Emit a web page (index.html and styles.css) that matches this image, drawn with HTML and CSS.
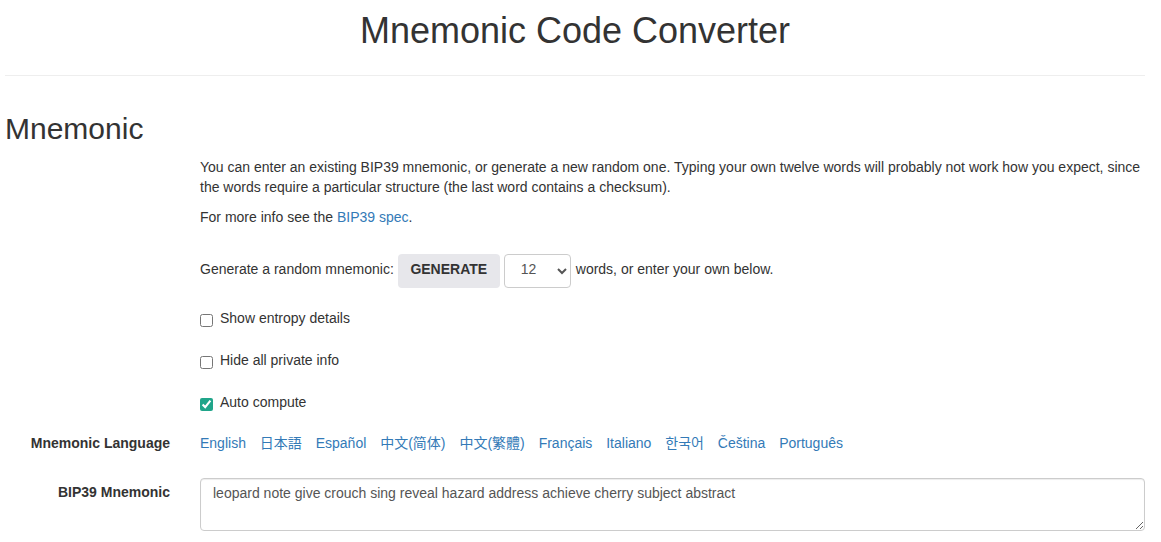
FILE: index.html
```html
<!DOCTYPE html>
<html lang="en">
<head>
<meta charset="utf-8">
<title>Mnemonic Code Converter</title>
<link rel="stylesheet" href="styles.css">
</head>
<body>
<div class="container">
  <h1 class="title">Mnemonic Code Converter</h1>
  <hr class="divider">
  <h2 class="section-title">Mnemonic</h2>
  <div class="form">
    <div class="form-row">
      <div class="label-col"></div>
      <div class="field-col">
        <p class="intro">You can enter an existing BIP39 mnemonic, or generate a new random one. Typing your own twelve words will probably not work how you expect, since the words require a particular structure (the last word contains a checksum).</p>
        <p class="intro">For more info see the <a href="#" class="link">BIP39 spec</a>.</p>
        <div class="generate-row">
          <span>Generate a random mnemonic:</span>
          <button class="btn-generate" type="button">GENERATE</button>
          <select class="strength">
            <option>3</option>
            <option>6</option>
            <option>9</option>
            <option selected>12</option>
            <option>15</option>
            <option>18</option>
            <option>21</option>
            <option>24</option>
          </select>
          <span>words, or enter your own below.</span>
        </div>
        <label class="check"><input type="checkbox"><span>Show entropy details</span></label>
        <label class="check"><input type="checkbox"><span>Hide all private info</span></label>
        <label class="check"><input type="checkbox" checked><span>Auto compute</span></label>
      </div>
    </div>
    <div class="form-row lang-row">
      <div class="label-col">Mnemonic Language</div>
      <div class="field-col languages">
        <a href="#" class="link">English</a>
        <a href="#" class="link cjk-jp">日本語</a>
        <a href="#" class="link">Español</a>
        <a href="#" class="link cjk-sc">中文(简体)</a>
        <a href="#" class="link cjk-tc">中文(繁體)</a>
        <a href="#" class="link">Français</a>
        <a href="#" class="link">Italiano</a>
        <a href="#" class="link cjk-kr">한국어</a>
        <a href="#" class="link">Čeština</a>
        <a href="#" class="link">Português</a>
      </div>
    </div>
    <div class="form-row phrase-row">
      <div class="label-col">BIP39 Mnemonic</div>
      <div class="field-col">
        <textarea class="phrase" rows="2">leopard note give crouch sing reveal hazard address achieve cherry subject abstract</textarea>
      </div>
    </div>
  </div>
</div>
</body>
</html>
```
FILE: styles.css
```css
html, body {
  margin: 0;
  padding: 0;
  background: #fff;
}
body {
  font-family: "Liberation Sans", Arial, "Noto Sans CJK SC", sans-serif;
  font-size: 14px;
  line-height: 20px;
  color: #333;
  overflow: hidden;
}
.container {
  margin-left: 5px;
  width: 1140px;
}
.title {
  margin: 11px 0 0;
  font-size: 36px;
  line-height: 40px;
  font-weight: normal;
  text-align: center;
}
.divider {
  margin: 24px 0 0;
  border: 0;
  border-top: 1px solid #eee;
  height: 0;
}
.section-title {
  margin: 36px 0 0;
  font-size: 30px;
  line-height: 33px;
  font-weight: normal;
}
.form {
  margin-top: 12px;
}
.form-row {
  display: grid;
  grid-template-columns: 165px 1fr;
  column-gap: 30px;
}
.label-col {
  text-align: right;
  font-weight: bold;
}
.field-col {
  min-width: 0;
}
.intro {
  margin: 0 0 10px;
}
.link {
  color: #337ab7;
  text-decoration: none;
}
.generate-row {
  margin-top: 27px;
  display: flex;
  align-items: baseline;
  gap: 4px;
  height: 34px;
}
.btn-generate {
  font-family: "Liberation Sans", Arial, sans-serif;
  font-size: 14px;
  line-height: 20px;
  font-weight: bold;
  color: #333;
  background: #e7e7eb;
  border: 0;
  border-radius: 4px;
  padding: 5px 12px 9px;
  height: 34px;
  width: 102px;
}
.strength {
  font-family: "Liberation Sans", Arial, sans-serif;
  font-size: 14px;
  color: #555;
  background: #fff;
  border: 1px solid #ccc;
  border-radius: 4px;
  height: 34px;
  width: 67px;
  padding: 4px 12px 8px;
  margin-right: 1px;
}
.check {
  display: flex;
  align-items: flex-start;
  margin-top: 20px;
  height: 20px;
}
.check + .check {
  margin-top: 22px;
}
.check input {
  margin: 6px 7px 0 0;
  width: 13px;
  height: 13px;
  accent-color: #20a58a;
}
.lang-row {
  margin-top: 21px;
}
.languages .link {
  margin-right: 10px;
}
.cjk-jp { font-family: "Liberation Sans", "Noto Sans CJK JP", sans-serif; }
.cjk-sc { font-family: "Liberation Sans", "Noto Sans CJK SC", sans-serif; }
.cjk-tc { font-family: "Liberation Sans", "Noto Sans CJK TC", sans-serif; }
.cjk-kr { font-family: "Liberation Sans", "Noto Sans CJK KR", sans-serif; }
.phrase-row {
  margin-top: 25px;
}
.phrase-row .label-col {
  padding-top: 4px;
}
.phrase {
  display: block;
  box-sizing: border-box;
  width: 945px;
  height: 53px;
  margin: 0;
  padding: 4px 12px;
  font-family: "Liberation Sans", Arial, sans-serif;
  font-size: 14px;
  line-height: 20px;
  color: #555;
  border: 1px solid #ccc;
  border-radius: 4px;
  box-shadow: inset 0 1px 1px rgba(0,0,0,.075);
  resize: vertical;
}
```
